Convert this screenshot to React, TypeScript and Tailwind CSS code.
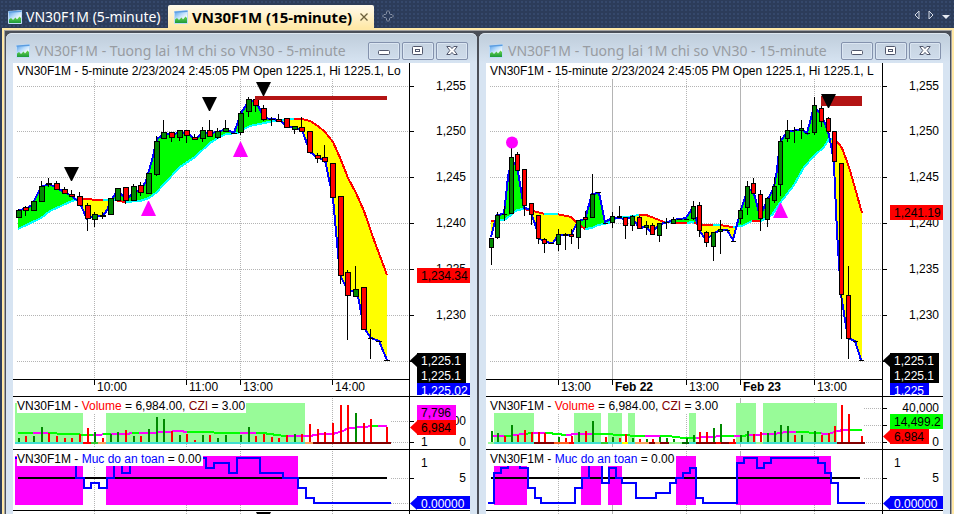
import React from 'react';

// --- Types ---
type Point = [number, number];
// x, body top, body bottom, high, low, rising, volume top (0 = no bar)
type Candle = [number, number, number, number, number, number, number];
type Band = [number, number];
type Span = [number, string];

interface Marker { kind: 'down' | 'up' | 'dot'; x: number; y: number }
interface Badge { y: number; w: number; text: string; fill: string; color: string; arrow?: boolean; h?: number }
interface GridLine { x: number; label: string; day?: boolean }

interface ChartData {
  name: string;
  title: string;
  left: number;
  header: string;
  bodyWidth: number;
  grid: GridLine[];
  candles: Candle[];
  price: Point[];
  average: Point[];
  averageSpans: Span[];
  markers: Marker[];
  zone: [number, number, number, number];
  volumeBands: Band[];
  strip: Span[];
  volumeAverage: Point[];
  volumeSpans: Span[];
  volumeTicks: { y: number; label: string }[];
  volumeOne: boolean;
  safetyBands: Band[];
  safety: Point[];
  priceBadges: Badge[];
  volumeBadges: Badge[];
}

// --- Colours ---
const RED = '#ff0000';
const GREEN = '#00ff00';
const DARK_GREEN = '#008a00';
const CYAN = '#00ffff';
const PINK = '#ff00ff';
const BLUE = '#0000ff';
const MAROON = '#800000';
const PALE = '#98fb98';
const TURQ = '#40e0d0';
const ORANGE = '#f4a460';

const PRICE_ROWS: [number, string][] = [
  [86, '1,255'], [131, '1,250'], [177, '1,245'], [223, '1,240'],
  [269, '1,235'], [315, '1,230'], [361, ''],
];

const fiveMinute: ChartData = {
  name: 'five',
  title: 'VN30F1M - Tuong lai 1M chi so VN30 - 5-minute',
  left: 13,
  header: 'VN30F1M - 5-minute 2/23/2024 2:45:05 PM Open 1225.1, Hi 1225.1, Lo',
  bodyWidth: 5,
  grid: [
    { x: 94, label: '10:00' }, { x: 186, label: '11:00' },
    { x: 240, label: '13:00' }, { x: 332, label: '14:00' },
  ],
  candles: [
    [18, 210, 217, 209, 217, 1, 438], [25, 207, 210, 206, 215, 0, 436], [33, 201, 210, 201, 210, 1, 436],
    [41, 186, 201, 181, 201, 1, 427], [48, 183, 184, 178, 186, 0, 433], [56, 183, 189, 181, 189, 0, 436],
    [64, 189, 193, 187, 193, 0, 438], [71, 194, 196, 190, 196, 0, 438], [79, 196, 205, 192, 205, 0, 434],
    [87, 205, 218, 203, 230, 0, 428], [94, 214, 219, 212, 226, 1, 432], [102, 215, 216, 212, 218, 0, 438],
    [110, 198, 214, 198, 214, 1, 434], [117, 188, 200, 188, 200, 1, 432], [125, 187, 200, 187, 203, 0, 430],
    [133, 186, 200, 184, 200, 1, 436], [140, 185, 192, 182, 195, 0, 436], [148, 173, 193, 173, 193, 1, 429],
    [156, 141, 174, 136, 175, 1, 417], [163, 132, 138, 120, 138, 1, 419], [171, 132, 137, 132, 141, 0, 431],
    [179, 130, 137, 130, 140, 1, 435], [186, 130, 135, 130, 142, 0, 434], [194, 137, 139, 134, 139, 0, 440],
    [202, 130, 138, 127, 141, 1, 435], [209, 130, 136, 120, 136, 0, 435], [217, 131, 137, 128, 138, 1, 438],
    [225, 128, 131, 120, 131, 1, 435], [233, 133, 133, 133, 133, 0, 0], [240, 113, 132, 111, 134, 1, 435],
    [248, 99, 111, 97, 116, 1, 427], [255, 99, 105, 97, 111, 0, 436], [263, 108, 119, 105, 120, 0, 434],
    [271, 119, 119, 117, 125, 0, 437], [278, 119, 121, 114, 121, 0, 438], [286, 118, 127, 118, 127, 0, 435],
    [294, 126, 129, 126, 133, 1, 434], [301, 127, 131, 117, 131, 0, 434], [309, 131, 152, 131, 152, 0, 424],
    [317, 155, 158, 153, 162, 0, 429], [324, 157, 161, 145, 161, 0, 432], [332, 163, 197, 163, 197, 0, 423],
    [340, 196, 275, 196, 283, 0, 405], [347, 272, 295, 270, 339, 0, 405], [355, 289, 296, 266, 296, 1, 413],
    [363, 287, 329, 287, 329, 0, 423], [370, 338, 338, 329, 358, 0, 419], [378, 341, 341, 341, 341, 0, 0],
    [386, 360, 360, 360, 360, 0, 427],
  ],
  price: [
    [18, 210], [26, 209], [32, 205], [41, 187], [49, 184], [57, 188], [64, 192], [72, 196], [80, 203], [87, 219],
    [95, 216], [103, 216], [107, 210], [111, 200], [118, 190], [126, 200], [134, 192], [141, 190], [146, 181],
    [152, 160], [157, 139], [164, 134], [172, 134], [180, 133], [187, 133], [195, 139], [203, 133], [210, 133],
    [218, 132], [226, 129], [234, 133], [241, 113], [249, 101], [256, 101], [264, 118], [272, 119], [279, 120],
    [287, 126], [295, 128], [302, 130], [310, 152], [318, 158], [325, 160], [333, 198], [340, 275], [348, 291],
    [354, 291], [358, 296], [364, 328], [371, 338], [379, 341], [387, 360],
  ],
  average: [
    [18, 229], [41, 218], [50, 211], [72, 201], [78, 199], [105, 200], [114, 200], [125, 202], [140, 201],
    [149, 198], [157, 192], [164, 184], [180, 167], [195, 157], [210, 143], [218, 138], [226, 134], [238, 133],
    [242, 130], [250, 126], [264, 123], [279, 120], [294, 119], [302, 119], [310, 121], [318, 126], [325, 132],
    [333, 142], [341, 160], [348, 178], [356, 193], [364, 211], [374, 240], [387, 275],
  ],
  averageSpans: [[18, CYAN], [81, RED], [103, CYAN], [115, RED], [125, CYAN], [294, RED], [387, '']],
  markers: [
    { kind: 'down', x: 71, y: 167 }, { kind: 'down', x: 209, y: 97 }, { kind: 'down', x: 263, y: 82 },
    { kind: 'up', x: 148, y: 201 }, { kind: 'up', x: 240, y: 142 }, { kind: 'down', x: 263, y: 512 },
  ],
  zone: [255, 96, 132, 4],
  volumeBands: [[15, 83], [106, 305]],
  strip: [[15, TURQ], [83, RED], [91, '#32cd32'], [98, ORANGE], [106, TURQ], [305, ORANGE], [313, MAROON], [391, '']],
  volumeAverage: [
    [18, 433], [48, 433], [65, 434], [94, 435], [110, 434], [150, 433], [165, 432], [180, 431], [187, 432],
    [240, 433], [263, 433], [277, 435], [285, 436], [310, 436], [320, 434], [333, 434], [343, 431], [348, 428],
    [363, 427], [373, 426], [387, 426],
  ],
  volumeSpans: [
    [18, GREEN], [33, PINK], [48, GREEN], [93, PINK], [103, GREEN], [111, PINK], [132, GREEN], [139, PINK],
    [187, GREEN], [240, PINK], [256, GREEN], [287, PINK], [371, GREEN], [378, PINK], [387, ''],
  ],
  volumeTicks: [{ y: 421, label: '20,000' }, { y: 442, label: '0' }],
  volumeOne: true,
  safetyBands: [[15, 83], [106, 298]],
  safety: [
    [15, 458], [76, 478], [84, 488], [91, 483], [99, 488], [107, 478], [114, 458], [122, 473], [130, 458],
    [206, 468], [214, 463], [229, 473], [237, 458], [260, 473], [283, 478], [298, 488], [306, 498], [314, 503],
    [391, 503],
  ],
  priceBadges: [
    { y: 268, w: 53, text: '1,234.34', fill: RED, color: '#000' },
    { y: 383, w: 53, text: '1,225.02', fill: BLUE, color: '#fff', h: 12 },
    { y: 368, w: 49, text: '1,225.1', fill: '#000', color: '#fff' },
    { y: 353, w: 49, text: '1,225.1', fill: '#000', color: '#fff', arrow: true },
  ],
  volumeBadges: [
    { y: 405, w: 39, text: '7,796', fill: PINK, color: '#000' },
    { y: 420, w: 39, text: '6,984', fill: RED, color: '#000', arrow: true },
  ],
};

const fifteenMinute: ChartData = {
  name: 'fifteen',
  title: 'VN30F1M - Tuong lai 1M chi so VN30 - 15-minute',
  left: 486,
  header: 'VN30F1M - 15-minute 2/23/2024 2:45:05 PM Open 1225.1, Hi 1225.1, L',
  bodyWidth: 4,
  grid: [
    { x: 558, label: '13:00' }, { x: 612, label: 'Feb 22', day: true }, { x: 686, label: '13:00' },
    { x: 740, label: 'Feb 23', day: true }, { x: 814, label: '13:00' },
  ],
  candles: [
    [491, 238, 247, 238, 264, 1, 431], [497, 215, 237, 212, 238, 1, 433], [504, 214, 214, 206, 220, 0, 436],
    [511, 157, 213, 148, 213, 1, 425], [517, 154, 170, 152, 170, 0, 435], [524, 169, 205, 169, 215, 0, 430],
    [531, 203, 214, 203, 224, 0, 432], [538, 215, 238, 215, 243, 0, 432], [544, 239, 243, 238, 252, 0, 433],
    [551, 243, 243, 243, 243, 0, 0], [558, 234, 244, 229, 250, 1, 437], [565, 234, 235, 233, 249, 0, 438],
    [571, 234, 236, 229, 243, 0, 436], [578, 220, 237, 220, 248, 1, 432], [585, 217, 219, 211, 227, 0, 431],
    [592, 194, 217, 174, 217, 1, 421], [598, 192, 192, 192, 192, 0, 0], [605, 223, 223, 223, 223, 0, 437],
    [612, 216, 222, 212, 227, 1, 437], [619, 216, 217, 206, 217, 0, 438], [625, 217, 225, 217, 238, 0, 434],
    [632, 216, 225, 215, 230, 1, 438], [639, 217, 228, 216, 228, 0, 439], [646, 225, 227, 221, 234, 1, 439],
    [652, 225, 234, 223, 234, 0, 439], [659, 223, 235, 223, 241, 1, 437], [666, 222, 222, 218, 228, 1, 438],
    [673, 219, 223, 217, 223, 1, 439], [679, 219, 219, 219, 219, 0, 0], [686, 219, 219, 219, 219, 1, 438],
    [693, 206, 218, 201, 219, 1, 435], [699, 205, 230, 202, 236, 0, 432], [706, 232, 242, 231, 246, 0, 432],
    [713, 232, 246, 232, 260, 1, 428], [720, 229, 231, 220, 253, 1, 424], [727, 230, 230, 230, 230, 0, 0],
    [733, 241, 241, 241, 241, 0, 439], [740, 210, 218, 208, 223, 1, 435], [747, 186, 207, 181, 214, 1, 431],
    [753, 183, 193, 178, 193, 0, 434], [760, 194, 218, 190, 230, 0, 432], [767, 198, 219, 197, 226, 1, 433],
    [774, 186, 200, 177, 202, 1, 431], [780, 141, 184, 136, 195, 1, 425], [787, 130, 138, 120, 141, 1, 426],
    [794, 130, 130, 127, 142, 0, 435], [801, 128, 130, 120, 138, 1, 435], [807, 133, 133, 133, 133, 0, 0],
    [814, 105, 132, 97, 134, 1, 431], [821, 108, 121, 105, 126, 0, 435], [828, 118, 131, 117, 132, 0, 433],
    [834, 131, 161, 131, 161, 0, 426], [841, 163, 294, 163, 338, 0, 405], [848, 295, 338, 266, 358, 0, 414],
    [855, 341, 341, 341, 341, 0, 0], [861, 360, 360, 360, 360, 0, 436],
  ],
  price: [
    [491, 237], [494, 225], [497, 215], [504, 214], [508, 177], [511, 163], [515, 163], [518, 172], [524, 208],
    [529, 209], [531, 213], [535, 224], [539, 238], [544, 242], [553, 243], [558, 235], [571, 235], [578, 221],
    [585, 219], [592, 194], [599, 193], [605, 222], [612, 218], [619, 218], [625, 219], [632, 217], [639, 228],
    [646, 227], [652, 233], [659, 224], [666, 223], [673, 220], [686, 218], [693, 207], [699, 230], [706, 240],
    [713, 234], [720, 230], [727, 230], [733, 240], [740, 213], [747, 191], [753, 190], [760, 216], [767, 201],
    [774, 187], [777, 170], [780, 142], [787, 132], [801, 129], [807, 133], [814, 107], [821, 114], [828, 131],
    [832, 150], [834, 165], [837, 232], [841, 295], [848, 338], [855, 341], [861, 360],
  ],
  average: [
    [491, 221], [497, 221], [506, 219], [517, 210], [524, 209], [541, 213], [545, 214], [557, 214], [571, 217],
    [576, 222], [585, 229], [592, 228], [598, 225], [609, 223], [617, 218], [627, 217], [639, 215], [646, 215],
    [654, 218], [664, 222], [687, 223], [692, 222], [700, 225], [713, 225], [720, 225], [732, 227], [742, 226],
    [752, 221], [761, 221], [772, 215], [780, 203], [794, 185], [804, 167], [814, 156], [824, 147], [829, 139],
    [835, 139], [842, 148], [849, 167], [857, 195], [862, 213],
  ],
  averageSpans: [
    [491, RED], [498, CYAN], [525, RED], [544, CYAN], [558, RED], [585, CYAN], [639, RED], [665, CYAN],
    [674, RED], [687, CYAN], [694, RED], [713, CYAN], [721, RED], [733, CYAN], [752, RED], [761, CYAN],
    [835, RED], [862, ''],
  ],
  markers: [
    { kind: 'dot', x: 512, y: 142 }, { kind: 'down', x: 828, y: 94 }, { kind: 'up', x: 780, y: 203 },
  ],
  zone: [821, 96, 41, 10],
  volumeBands: [[494, 534], [574, 601], [608, 622], [628, 635], [689, 696], [736, 756], [763, 837]],
  strip: [
    [488, PALE], [494, TURQ], [534, MAROON], [554, '#ff6020'], [569, RED], [574, TURQ], [601, '#32cd32'],
    [608, TURQ], [622, '#ffff00'], [628, TURQ], [635, ORANGE], [649, MAROON], [655, ORANGE], [660, MAROON],
    [669, PALE], [682, '#006400'], [689, TURQ], [696, MAROON], [716, RED], [721, MAROON], [729, RED],
    [736, TURQ], [756, PALE], [763, TURQ], [837, MAROON], [865, ''],
  ],
  volumeAverage: [
    [492, 436], [510, 436], [514, 435], [524, 434], [532, 433], [551, 433], [554, 434], [569, 435], [574, 434],
    [606, 434], [620, 435], [640, 436], [668, 436], [684, 438], [694, 438], [724, 436], [742, 436], [749, 435],
    [774, 434], [786, 432], [804, 432], [814, 433], [829, 434], [837, 431], [844, 430], [862, 430],
  ],
  volumeSpans: [
    [492, PINK], [504, GREEN], [512, PINK], [524, GREEN], [531, PINK], [545, GREEN], [566, PINK], [592, GREEN],
    [645, PINK], [660, GREEN], [696, PINK], [721, GREEN], [734, PINK], [742, GREEN], [749, PINK], [796, GREEN],
    [821, PINK], [848, GREEN], [862, ''],
  ],
  volumeTicks: [{ y: 408, label: '40,000' }, { y: 425, label: '' }, { y: 442, label: '0' }],
  volumeOne: false,
  safetyBands: [[494, 527], [581, 601], [608, 622], [676, 696], [736, 831]],
  safety: [
    [488, 503], [494, 473], [501, 468], [508, 463], [520, 468], [528, 488], [535, 498], [541, 503], [575, 488],
    [582, 478], [589, 458], [602, 483], [609, 468], [616, 478], [622, 483], [636, 498], [656, 493], [670, 483],
    [676, 478], [683, 473], [690, 468], [696, 498], [703, 503], [737, 463], [744, 458], [757, 468], [764, 463],
    [771, 458], [818, 463], [825, 473], [831, 483], [838, 503], [865, 503],
  ],
  priceBadges: [
    { y: 205, w: 53, text: '1,241.19', fill: RED, color: '#000' },
    { y: 383, w: 39, text: '1,225', fill: BLUE, color: '#fff', h: 12 },
    { y: 368, w: 49, text: '1,225.1', fill: '#000', color: '#fff' },
    { y: 353, w: 49, text: '1,225.1', fill: '#000', color: '#fff', arrow: true },
  ],
  volumeBadges: [
    { y: 414, w: 53, text: '14,499.2', fill: GREEN, color: '#000' },
    { y: 429, w: 39, text: '6,984', fill: RED, color: '#000', arrow: true },
  ],
};

// --- Geometry helpers ---
const valueAt = (points: Point[], x: number) => {
  const i = points.findIndex(p => p[0] >= x);
  if (i < 0) return points[points.length - 1][1];
  if (i === 0) return points[0][1];
  const [x0, y0] = points[i - 1];
  const [x1, y1] = points[i];
  return y0 + ((y1 - y0) * (x - x0)) / (x1 - x0);
};

const linePath = (points: Point[]) => points.map(([x, y], i) => `${i ? 'L' : 'M'}${x} ${y}`).join('');

const slicePath = (points: Point[], from: number, to: number) =>
  linePath([
    [from, valueAt(points, from)],
    ...points.filter(p => p[0] > from && p[0] < to),
    [to, valueAt(points, to)],
  ]);

// One column per pixel between the price and its average
const cloudPath = (data: ChartData, above: boolean) => {
  let d = '';
  const end = data.average[data.average.length - 1][0];
  for (let x = data.price[0][0]; x < end; x++) {
    const a = valueAt(data.price, x);
    const b = valueAt(data.average, x);
    if (a < b === above) d += `M${x + 0.5} ${a}V${b}`;
  }
  return d;
};

const stepPath = (points: Point[]) =>
  points.map(([x, y], i) => (i ? `H${x}V${y}` : `M${x} ${y}`)).join('');

const SpanLines: React.FC<{ points: Point[]; spans: Span[] }> = ({ points, spans }) => (
  <>
    {spans.slice(0, -1).map(([from, color], i) => (
      <path key={from} d={slicePath(points, from, spans[i + 1][0])} stroke={color} strokeWidth="2" fill="none" />
    ))}
  </>
);

const MarkerShape: React.FC<{ marker: Marker }> = ({ marker: { kind, x, y } }) => {
  if (kind === 'dot') return <circle cx={x} cy={y + 0.5} r="6" fill={PINK} />;
  if (kind === 'down') return <path d={`M${x - 7} ${y}h15l-7 14h-1z`} fill="#000" />;
  return <path d={`M${x} ${y}h1l7 15h-15z`} fill={PINK} />;
};

const AxisBadge: React.FC<{ badge: Badge; x: number }> = ({ badge: { y, w, text, fill, color, arrow, h = 15 }, x }) => (
  <g>
    <rect x={x} y={y} width={w} height={h} fill={fill} />
    {arrow && <path d={`M${x - 7} ${y + 7.5}L${x} ${y + 1}V${y + 14}z`} fill={fill} />}
    <text x={x + 4} y={y + 12} fill={color}>{text}</text>
  </g>
);

const Chart: React.FC<{ data: ChartData }> = ({ data }) => {
  const { left, grid } = data;
  const axis = left + 396;
  const badgeX = left + 404;
  const labelX = left + 453;
  const plotLeft = left + 4;
  const dataEnd = left + 378;

  return (
    <svg
      viewBox={`${left} 63 457 451`}
      className="block w-full bg-white font-['Liberation_Sans',Arial,sans-serif] text-[12px]"
      role="img"
      aria-label={data.title}
    >
      {/* Grid */}
      <g stroke="#b4b4b4" shapeRendering="crispEdges">
        {PRICE_ROWS.map(([y]) => (
          <path key={y} d={`M${plotLeft} ${y + 0.5}H${axis}`} strokeDasharray="1 1" />
        ))}
        {grid.map(({ x, day }) => (
          <path key={x} d={`M${x + 0.5} 79V379M${x + 0.5} 398V447M${x + 0.5} 451V514`} strokeDasharray={day ? undefined : '1 1'} />
        ))}
        {[...data.volumeTicks.map(t => t.y), 478, 503].map(y => (
          <path key={y} d={`M${dataEnd} ${y + 0.5}H${axis}`} strokeDasharray="1 1" />
        ))}
      </g>

      {/* Price */}
      <g shapeRendering="crispEdges">
        <path d={cloudPath(data, true)} stroke={GREEN} />
        <path d={cloudPath(data, false)} stroke="#ffff00" />
        <SpanLines points={data.average} spans={data.averageSpans} />
        <path d={linePath(data.price)} stroke={BLUE} strokeWidth="2" fill="none" />
        {data.candles.map(([x, top, bottom, high, low, up]) => (
          <g key={x} stroke="#000">
            <path d={`M${x + 0.5} ${high}V${low + 1}`} />
            {bottom === top
              ? <path d={`M${x - 2} ${top + 0.5}h${data.bodyWidth + 1}`} />
              : <rect x={x - 1.5} y={top + 0.5} width={data.bodyWidth} height={bottom - top} fill={up ? DARK_GREEN : RED} />}
          </g>
        ))}
        <rect x={data.zone[0]} y={data.zone[1]} width={data.zone[2]} height={data.zone[3]} fill="#b31414" />
      </g>
      {data.markers.map(m => <MarkerShape key={`${m.x}-${m.y}`} marker={m} />)}
      <text x={plotLeft} y="75">{data.header}</text>

      {/* Volume */}
      <g shapeRendering="crispEdges">
        {data.volumeBands.map(([from, to]) => (
          <rect key={from} x={from} y="403" width={to - from} height="39" fill={PALE} />
        ))}
        {data.strip.slice(0, -1).map(([from, color], i) => (
          <rect key={from} x={from} y="442" width={data.strip[i + 1][0] - from} height="2" fill={color} />
        ))}
        <SpanLines points={data.volumeAverage} spans={data.volumeSpans} />
        {data.candles.filter(c => c[6] > 0).map(c => (
          <rect key={c[0]} x={c[0]} y={c[6]} width="2" height={442 - c[6]} fill={c[5] ? DARK_GREEN : RED} />
        ))}
        <rect x={plotLeft} y="398" width="229" height="15" fill="#fff" />
      </g>
      <text x={plotLeft} y="410">
        VN30F1M - <tspan fill={RED}>Volume</tspan> = 6,984.00, <tspan fill={MAROON}>CZI</tspan> = 3.00
      </text>

      {/* Safety level */}
      <g shapeRendering="crispEdges">
        {data.safetyBands.map(([from, to]) => (
          <rect key={from} x={from} y="456" width={to - from} height="49" fill={PINK} />
        ))}
        <path d={`M${left + 5} 478H${left + 374}`} stroke="#000" strokeWidth="2" />
        <path d={stepPath(data.safety)} stroke={BLUE} strokeWidth="2" fill="none" />
        <rect x={plotLeft} y="451" width="186" height="15" fill="#fff" />
      </g>
      <text x={plotLeft} y="463">
        VN30F1M - <tspan fill={BLUE}>Muc do an toan</tspan> = 0.00
      </text>

      {/* Pane borders, axis and ticks */}
      <g stroke="#000" shapeRendering="crispEdges">
        <path d={`M${axis + 0.5} 63V514`} />
        <path d={`M${left} 379.5H${axis}`} />
        <path d={`M${left} 396.5H${left + 457}M${left} 449.5H${left + 457}M${left} 510.5H${left + 457}`} />
        {[...PRICE_ROWS.map(r => r[0]), ...data.volumeTicks.map(t => t.y), 478].map(y => (
          <path key={y} d={`M${axis} ${y + 0.5}h5`} />
        ))}
        {grid.map(({ x }) => <path key={x} d={`M${x + 0.5} 379v6`} />)}
      </g>
      {grid.map(({ x, label, day }) => (
        <text key={x} x={x + 3} y="391" className={day ? 'font-bold' : undefined}>{label}</text>
      ))}

      {/* Axis labels */}
      <g textAnchor="end">
        {PRICE_ROWS.map(([y, label]) => <text key={y} x={labelX} y={y + 4}>{label}</text>)}
        {data.volumeTicks.map(({ y, label }) => <text key={y} x={labelX} y={y + 4}>{label}</text>)}
        <text x={labelX} y="482">5</text>
      </g>
      {data.volumeOne && <text x={badgeX + 4} y="446">1</text>}
      <text x={badgeX + 4} y="467">1</text>
      <clipPath id={`axis-${data.name}`}>
        <rect x={axis} y="63" width="61" height="332" />
      </clipPath>
      <g clipPath={`url(#axis-${data.name})`}>
        {data.priceBadges.map(b => <AxisBadge key={b.y} badge={b} x={badgeX} />)}
      </g>
      {data.volumeBadges.map(b => <AxisBadge key={b.y} badge={b} x={badgeX} />)}
      <AxisBadge badge={{ y: 496, w: 53, text: '0.00000', fill: BLUE, color: '#fff', arrow: true, h: 13 }} x={badgeX} />
    </svg>
  );
};

// --- Icons ---
const ChartIcon: React.FC = () => (
  <svg viewBox="0 0 14 14" className="size-3.5 shrink-0" aria-hidden="true">
    <defs>
      <linearGradient id="sky" x1="0" y1="0" x2="0.8" y2="1">
        <stop offset="0" stopColor="#4a97e6" />
        <stop offset="0.45" stopColor="#b9dcfb" />
        <stop offset="0.8" stopColor="#ffffff" />
      </linearGradient>
      <linearGradient id="hill" x1="0" y1="0" x2="0" y2="1">
        <stop offset="0" stopColor="#6bd64f" />
        <stop offset="1" stopColor="#1c9a3a" />
      </linearGradient>
    </defs>
    <path d="M.5 1.500L13.500.5V13.500H.5z" fill="url(#sky)" stroke="#bfdcf7" />
    <path d="M.5 1.600L13.500.6V2L.5 2.800z" fill="#5b9ce0" />
    <path d="M1 9.500L3 8 5 10 7.500 7.500 9 9.500 11.500 6.500 13 8V13H1z" fill="url(#hill)" />
  </svg>
);

const captionButton =
  'flex h-[18px] w-8 items-center justify-center rounded-xs border border-[#8492ad] bg-linear-to-b from-[#c6d3e1] to-[#cfdceb] shadow-[inset_0_0_0_1px_#dbe6f2]';

const WindowButtons: React.FC = () => (
  <div className="flex shrink-0 gap-0.5">
    <button type="button" aria-label="Minimize" className={captionButton}>
      <svg viewBox="0 0 12 12" className="size-3" fill="#fff" stroke="#50566b">
        <rect x="0.5" y="5.5" width="11" height="4" rx="1" />
      </svg>
    </button>
    <button type="button" aria-label="Maximize" className={captionButton}>
      <svg viewBox="0 0 12 12" className="size-3" fill="#fff" stroke="#50566b">
        <rect x="0.5" y="1.5" width="10" height="8" rx="1" />
        <rect x="3.5" y="4.5" width="4" height="2" />
      </svg>
    </button>
    <button type="button" aria-label="Close" className={captionButton}>
      <svg viewBox="0 0 12 12" className="size-3" fill="#fff" stroke="#50566b">
        <path d="M.8 1.5h3.4L6 3.6 7.8 1.5h3.4L8.2 5.5l3 4H7.8L6 7.4 4.2 9.5H.8l3-4z" />
      </svg>
    </button>
  </div>
);

const ChartWindow: React.FC<{ data: ChartData }> = ({ data }) => (
  <section className="min-w-0 flex-1 rounded-t-md bg-[#d7e4f2]">
    <div className="flex h-[30px] items-center rounded-t-md border-t border-[#dde6ef] bg-linear-to-b from-[#bfcddb] to-[#d7e4f2] pt-[5px] pr-[9px] pl-2.5">
      <ChartIcon />
      <h2 className="ml-[5px] min-w-0 flex-1 overflow-hidden font-['Noto_Sans','Segoe_UI',sans-serif] text-[14px] leading-5 whitespace-nowrap text-[#989ca2]">
        {data.title}
      </h2>
      <WindowButtons />
    </div>
    <div className="px-[7px]">
      <Chart data={data} />
    </div>
  </section>
);

const TabBar: React.FC = () => (
  <header className="flex h-7 items-end bg-[radial-gradient(#35486b_1px,transparent_1px)] bg-size-[4px_4px] pr-1 pl-0.5 font-['Noto_Sans','Segoe_UI',sans-serif] leading-5">
    <div role="tablist" className="flex">
      <button type="button" role="tab" aria-selected="false" className="flex h-[23px] w-[166px] items-center gap-1 pl-1.5 text-[14px] whitespace-nowrap text-white">
        <ChartIcon />
        VN30F1M (5-minute)
      </button>
      <div className="flex h-[23px] w-[206px] items-center rounded-t-xs bg-linear-to-b from-[#fffaec] to-[#ffe8a6] pr-1.5 pl-1.5">
        <button type="button" role="tab" aria-selected="true" className="flex flex-1 items-center gap-1 text-[15px] font-bold whitespace-nowrap text-black">
          <ChartIcon />
          VN30F1M (15-minute)
        </button>
        <button type="button" aria-label="Close tab">
          <svg viewBox="0 0 8 8" className="size-2" stroke="#6b5f3c" strokeWidth="1.3">
            <path d="M.5.5l7 7M7.5.5l-7 7" />
          </svg>
        </button>
      </div>
    </div>
    <button type="button" aria-label="New tab" className="mb-1.5 ml-2">
      <svg viewBox="0 0 12 12" className="size-3" fill="none" stroke="#8b95a8">
        <path d="M4.5 3.5V2L6 .5 7.5 2v1.500l1 1H10L11.500 6 10 7.500H8.500l-1 1V10L6 11.500 4.500 10V8.500l-1-1H2L.5 6 2 4.500h1.500z" />
      </svg>
    </button>
    <nav className="mb-2 ml-auto flex items-center gap-2" aria-label="Tab scrolling">
      <button type="button" aria-label="Previous tab">
        <svg viewBox="0 0 6 10" className="h-2.5 w-1.5" fill="none" stroke="#d5dbe6"><path d="M5 1v8L1 5z" /></svg>
      </button>
      <button type="button" aria-label="Next tab">
        <svg viewBox="0 0 6 10" className="h-2.5 w-1.5" fill="none" stroke="#d5dbe6"><path d="M1 1v8l4-4z" /></svg>
      </button>
      <button type="button" aria-label="All tabs">
        <svg viewBox="0 0 8 10" className="h-2.5 w-2" fill="#e6eaf1"><path d="M0 5h8L4 9z" /></svg>
      </button>
    </nav>
  </header>
);

const App: React.FC = () => (
  <div className="min-h-screen overflow-hidden bg-[#2c3c5a]">
    <TabBar />
    <main className="ml-0.5 border-x-2 border-t-2 border-[#ffe8a6]">
      <div className="border-x border-t border-[#a3a3a3] bg-[#4b4f58] px-px pt-0.5">
        <div className="flex gap-0.5">
          <ChartWindow data={fiveMinute} />
          <ChartWindow data={fifteenMinute} />
        </div>
      </div>
    </main>
  </div>
);

export default App;
